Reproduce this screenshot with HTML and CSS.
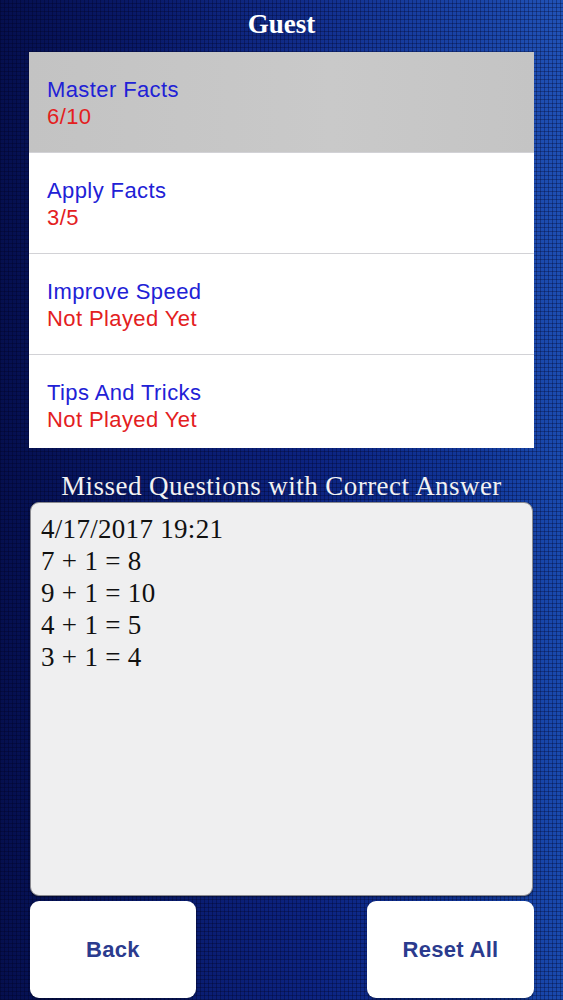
FILE: index.html
```html
<!DOCTYPE html>
<html>
<head>
<meta charset="utf-8">
<link rel="stylesheet" href="styles.css">
</head>
<body>
<div class="screen">
  <header class="title">Guest</header>
  <ul class="list">
    <li class="row selected"><span class="name">Master Facts</span><span class="score">6/10</span></li>
    <li class="row"><span class="name">Apply Facts</span><span class="score">3/5</span></li>
    <li class="row"><span class="name">Improve Speed</span><span class="score">Not Played Yet</span></li>
    <li class="row"><span class="name">Tips And Tricks</span><span class="score">Not Played Yet</span></li>
  </ul>
  <h2 class="missed-title">Missed Questions with Correct Answer</h2>
  <div class="missed-box">
    <div>4/17/2017 19:21</div>
    <div>7 + 1 = 8</div>
    <div>9 + 1 = 10</div>
    <div>4 + 1 = 5</div>
    <div>3 + 1 = 4</div>
  </div>
  <div class="buttons">
    <button class="btn">Back</button>
    <button class="btn">Reset All</button>
  </div>
</div>
</body>
</html>
```
FILE: styles.css
```css
html, body {
  margin: 0;
  padding: 0;
}
body {
  width: 563px;
  height: 1000px;
  overflow: hidden;
  background-color: #0b1f78;
  background-image:
    repeating-linear-gradient(0deg, rgba(0,0,30,0.3) 0 1px, transparent 1px 4px),
    repeating-linear-gradient(90deg, rgba(0,0,30,0.3) 0 1px, transparent 1px 4px),
    radial-gradient(ellipse 420px 520px at 100% 0%, rgba(40,90,190,0.5), transparent),
    linear-gradient(90deg, #050f4e 0%, #091a6a 25%, #0c2380 55%, #11379a 85%, #1a4aae 100%);
}
.screen {
  display: flex;
  flex-direction: column;
  height: 1000px;
}
.title {
  height: 52px;
  display: flex;
  align-items: center;
  justify-content: center;
  font-family: "Liberation Serif", serif;
  font-weight: bold;
  font-size: 27px;
  color: #ffffff;
  padding-bottom: 4px;
  box-sizing: border-box;
}
.list {
  list-style: none;
  margin: 0 29px;
  padding: 0;
  height: 396px;
  overflow: hidden;
  background: #ffffff;
}
.row {
  border-bottom: 1px solid #d2d2d6;
  display: flex;
  flex-direction: column;
  justify-content: center;
  padding-left: 18px;
  padding-top: 1px;
  box-sizing: border-box;
  height: 101px;
  font-family: "Liberation Sans", Arial, sans-serif;
  font-size: 22px;
  letter-spacing: 0.4px;
  line-height: 27px;
}
.row.selected {
  background: linear-gradient(90deg, #c3c3c3, #c9c9c9 60%, #c4c4c4);
}
.name {
  color: #2121d6;
}
.score {
  color: #e3201e;
}
.missed-title {
  margin: 0;
  height: 54px;
  display: flex;
  align-items: center;
  justify-content: center;
  font-family: "Liberation Serif", serif;
  font-weight: normal;
  font-size: 27px;
  letter-spacing: 0.45px;
  color: #f2f2f2;
  padding-top: 22px;
  box-sizing: border-box;
}
.missed-box {
  margin: 0 30px;
  height: 394px;
  box-sizing: border-box;
  background: #efeff0;
  border: 1px solid #8a8a90;
  border-radius: 9px;
  box-shadow: 0 1px 2px rgba(0,0,0,0.5);
  padding: 10px 10px;
  font-family: "Liberation Serif", serif;
  font-size: 27px;
  letter-spacing: 0.3px;
  line-height: 32px;
  color: #111111;
}
.buttons {
  display: flex;
  justify-content: space-between;
  margin: 5px 29px 0 30px;
}
.btn {
  width: 166px;
  height: 97px;
  border: none;
  border-radius: 9px;
  background: #ffffff;
  font-family: "Liberation Sans", Arial, sans-serif;
  font-weight: bold;
  font-size: 22px;
  letter-spacing: 0.3px;
  color: #2b3b8e;
  padding: 0;
  box-shadow: 0 1px 2px rgba(0,0,0,0.4);
}
.btn:last-child {
  width: 167px;
}
```
